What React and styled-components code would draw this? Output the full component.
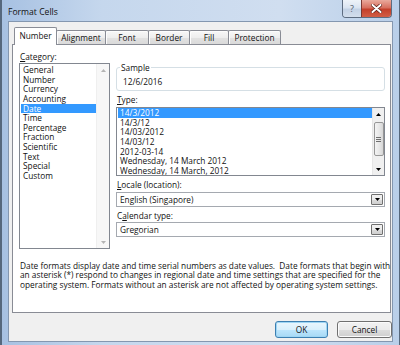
import React from 'react';
import styled, { createGlobalStyle, css } from 'styled-components';

const GlobalStyle = createGlobalStyle`
  html, body { margin: 0; padding: 0; background: #c6d7ec; }
  body { font-family: "Open Sans", "Noto Sans", sans-serif; color: #000; }
  * { box-sizing: border-box; }
`;

const Window = styled.div`
  width: 400px;
  height: 345px;
  display: flex;
  flex-direction: column;
  padding: 0 6px 3px 6px;
  border-left: 2px solid #56687d;
  border-right: 1px solid #56687d;
  background: linear-gradient(90deg, #a7c1e2 0%, #c5d7ed 25%, #d0def0 70%, #b9cfe9 100%);
  overflow: hidden;
`;

const TitleBar = styled.div`
  height: 21px;
  flex-shrink: 0;
  display: flex;
  align-items: flex-start;
`;

const Title = styled.div`
  font-size: 8.6px;
  line-height: 10px;
  padding-top: 7px;
  color: #111;
`;

const CaptionButtons = styled.div`
  margin-left: auto;
  margin-right: 1px;
  height: 18px;
  display: flex;
  border: 1px solid #5d6c80;
  border-top: none;
  border-radius: 0 0 4px 4px;
  overflow: hidden;
`;

const CaptionButton = styled.div`
  width: ${p => p.w}px;
  display: flex;
  align-items: center;
  justify-content: center;
  font-size: 9px;
  color: #55606e;
  ${p => p.close ? css`
    background: linear-gradient(180deg, #e9a99c 0%, #d7705f 45%, #c4402b 55%, #d25e45 100%);
    border-left: 1px solid #7b3a33;
  ` : css`
    background: linear-gradient(180deg, #eef3f9 0%, #dae4f1 45%, #c3d2e5 55%, #d3deec 100%);
  `}
`;

const Body = styled.div`
  flex: 1;
  display: flex;
  flex-direction: column;
  background: #f0f0f0;
  border: 1px solid #8497b0;
  padding: 5px 0 0 3px;
  font-size: 8.3px;
  color: #111;
`;

const TabStrip = styled.div`
  height: 18px;
  display: flex;
  align-items: flex-end;
  padding-left: 2px;
  margin-bottom: -1px;
  position: relative;
  z-index: 1;
`;

const Tab = styled.div`
  width: ${p => p.w}px;
  margin-left: -1px;
  display: flex;
  align-items: center;
  justify-content: center;
  border: 1px solid #898c95;
  border-bottom: none;
  border-radius: 2px 2px 0 0;
  ${p => p.active ? css`
    height: 18px;
    margin-left: 0;
    background: #fff;
    position: relative;
    z-index: 2;
    padding-bottom: 2px;
  ` : css`
    height: 14px;
    margin-bottom: 1px;
    background: linear-gradient(180deg, #f8f8f8 0%, #eeeeee 50%, #e2e2e2 51%, #dadada 100%);
    box-shadow: inset 1px 1px 0 #fdfdfd;
  `}
`;

const Panel = styled.div`
  height: 269px;
  margin-right: 1px;
  background: #fff;
  border: 1px solid #898c95;
  padding: 7px 5px 0 6px;
  display: flex;
  flex-direction: column;
`;

const Columns = styled.div`
  display: grid;
  grid-template-columns: 91px 269px;
  column-gap: 6px;
`;

const Column = styled.div`
  display: flex;
  flex-direction: column;
  padding-top: ${p => p.top || 0}px;
`;

const Label = styled.div`
  line-height: 10px;
  padding-left: 1px;
  margin-top: ${p => p.mt || 0}px;
  margin-bottom: ${p => p.mb || 0}px;
`;

const ListBox = styled.div`
  height: ${p => p.h}px;
  display: flex;
  border: 1px solid #828790;
  background: #fff;
  overflow: hidden;
`;

const Items = styled.div`
  flex: 1;
  padding-top: ${p => p.pt || 0}px;
  padding-left: 1px;
  overflow: hidden;
`;

const Item = styled.div`
  height: 9.65px;
  line-height: 9.65px;
  padding-left: 2px;
  white-space: nowrap;
  ${p => p.selected && css`
    background: #3399ff;
    color: #fff;
  `}
`;

const ScrollBar = styled.div`
  width: ${p => p.w}px;
  display: flex;
  flex-direction: column;
  align-items: center;
  justify-content: space-between;
  background: ${p => p.disabled ? '#f7f7f7' : '#f0f0f0'};
  border-left: 1px solid ${p => p.disabled ? '#efefef' : '#e6e6e6'};
`;

const ArrowBox = styled.div`
  height: 12px;
  width: 100%;
  display: flex;
  align-items: center;
  justify-content: center;
`;

const Track = styled.div`
  flex: 1;
  width: 100%;
  display: flex;
  flex-direction: column;
  align-items: center;
  padding-top: 2px;
`;

const Thumb = styled.div`
  width: 10px;
  height: 34px;
  border: 1px solid #979797;
  border-radius: 2px;
  background: linear-gradient(90deg, #f3f3f3 0%, #e8e8e8 50%, #d6d6d6 100%);
  display: flex;
  align-items: center;
  justify-content: center;
`;

const GroupBox = styled.fieldset`
  margin: 0;
  padding: 1px 6px 3px;
  border: 1px solid #d5dfe5;
  border-radius: 3px;
  min-width: 0;
  height: 28px;
`;

const Legend = styled.legend`
  padding: 0 1px;
  margin-left: -3px;
  line-height: 9px;
`;

const SampleValue = styled.div`
  line-height: 10px;
  padding-top: 4px;
`;

const Combo = styled.div`
  height: 15px;
  display: flex;
  align-items: center;
  border: 1px solid #a5a9b0;
  background: #fff;
  padding: 1px;
`;

const ComboText = styled.div`
  flex: 1;
  padding-left: 2px;
  line-height: 10px;
`;

const ComboButton = styled.div`
  width: 12px;
  height: 100%;
  display: flex;
  align-items: center;
  justify-content: center;
  border: 1px solid #707070;
  border-radius: 1px;
  background: linear-gradient(180deg, #f2f2f2 0%, #ebebeb 50%, #dddddd 51%, #cfcfcf 100%);
`;

const Description = styled.div`
  margin-top: 12px;
  padding-left: 1px;
  line-height: 9.33px;
  white-space: pre;
`;

const Footer = styled.div`
  margin-top: 8px;
  display: flex;
  justify-content: flex-end;
  gap: 9px;
`;

const Button = styled.div`
  width: ${p => p.w}px;
  height: 17px;
  display: flex;
  align-items: center;
  justify-content: center;
  border-radius: 3px;
  border: 1px solid ${p => p.primary ? '#3c7fb1' : '#707070'};
  background: ${p => p.primary
    ? 'linear-gradient(180deg, #eaf6fd 0%, #d9f0fc 50%, #bee6fd 51%, #a7d9f5 100%)'
    : 'linear-gradient(180deg, #f2f2f2 0%, #ebebeb 50%, #dddddd 51%, #cfcfcf 100%)'};
  box-shadow: inset 0 0 0 1px ${p => p.primary ? '#9fd6f4' : '#fbfbfb'};
`;

const Arrow = ({ up, color = '#000', w = 5 }) => (
  <svg width={w} height="3" viewBox="0 0 5 3">
    <path d={up ? 'M0 3 L2.5 0 L5 3 Z' : 'M0 0 L5 0 L2.5 3 Z'} fill={color} />
  </svg>
);

const Grip = () => (
  <svg width="5" height="5" viewBox="0 0 5 5">
    <path d="M0 0.5 H5 M0 2.5 H5 M0 4.5 H5" stroke="#6f6f6f" strokeWidth="1" />
  </svg>
);

const categories = ['General', 'Number', 'Currency', 'Accounting', 'Date', 'Time', 'Percentage',
  'Fraction', 'Scientific', 'Text', 'Special', 'Custom'];

const types = ['14/3/2012', '14/3/12', '14/03/2012', '14/03/12', '2012-03-14',
  'Wednesday, 14 March 2012', 'Wednesday, 14 March, 2012'];

const tabs = [
  { name: 'Number', w: 43, active: true },
  { name: 'Alignment', w: 50 },
  { name: 'Font', w: 44 },
  { name: 'Border', w: 42 },
  { name: 'Fill', w: 40 },
  { name: 'Protection', w: 53 },
];

export default function App() {
  return (
    <>
      <GlobalStyle />
      <Window>
        <TitleBar>
          <Title>Format Cells</Title>
          <CaptionButtons>
            <CaptionButton w={18}>?</CaptionButton>
            <CaptionButton w={30} close>
              <svg width="11" height="9" viewBox="0 0 11 9">
                <path d="M1.5 1 L9.5 8 M9.5 1 L1.5 8" stroke="#5a1f18" strokeWidth="3.4" strokeLinecap="round" />
                <path d="M1.5 1 L9.5 8 M9.5 1 L1.5 8" stroke="#fff" strokeWidth="2" strokeLinecap="round" />
              </svg>
            </CaptionButton>
          </CaptionButtons>
        </TitleBar>
        <Body>
          <TabStrip>
            {tabs.map(t => (
              <Tab key={t.name} w={t.w} active={t.active}>{t.name}</Tab>
            ))}
          </TabStrip>
          <Panel>
            <Columns>
              <Column>
                <Label mb={1}><u>C</u>ategory:</Label>
                <ListBox h={186}>
                  <Items pt={1}>
                    {categories.map(c => (
                      <Item key={c} selected={c === 'Date'}>{c}</Item>
                    ))}
                  </Items>
                  <ScrollBar w={13} disabled>
                    <ArrowBox><Arrow up color="#b4b4b4" /></ArrowBox>
                    <ArrowBox><Arrow color="#b4b4b4" /></ArrowBox>
                  </ScrollBar>
                </ListBox>
              </Column>
              <Column top={11}>
                <GroupBox>
                  <Legend>Sample</Legend>
                  <SampleValue>12/6/2016</SampleValue>
                </GroupBox>
                <Label mt={4} mb={2}><u>T</u>ype:</Label>
                <ListBox h={69}>
                  <Items>
                    {types.map((t, i) => (
                      <Item key={t} selected={i === 0}>{t}</Item>
                    ))}
                  </Items>
                  <ScrollBar w={12}>
                    <ArrowBox><Arrow up /></ArrowBox>
                    <Track>
                      <Thumb><Grip /></Thumb>
                    </Track>
                    <ArrowBox><Arrow /></ArrowBox>
                  </ScrollBar>
                </ListBox>
                <Label mt={4} mb={2}><u>L</u>ocale (location):</Label>
                <Combo>
                  <ComboText>English (Singapore)</ComboText>
                  <ComboButton><Arrow /></ComboButton>
                </Combo>
                <Label mt={4} mb={1}>C<u>a</u>lendar type:</Label>
                <Combo>
                  <ComboText>Gregorian</ComboText>
                  <ComboButton><Arrow /></ComboButton>
                </Combo>
              </Column>
            </Columns>
            <Description>
              {'Date formats display date and time serial numbers as date values.  Date formats that begin with\n' +
                'an asterisk (*) respond to changes in regional date and time settings that are specified for the\n' +
                'operating system. Formats without an asterisk are not affected by operating system settings.'}
            </Description>
          </Panel>
          <Footer>
            <Button w={53} primary>OK</Button>
            <Button w={55}>Cancel</Button>
          </Footer>
        </Body>
      </Window>
    </>
  );
}
